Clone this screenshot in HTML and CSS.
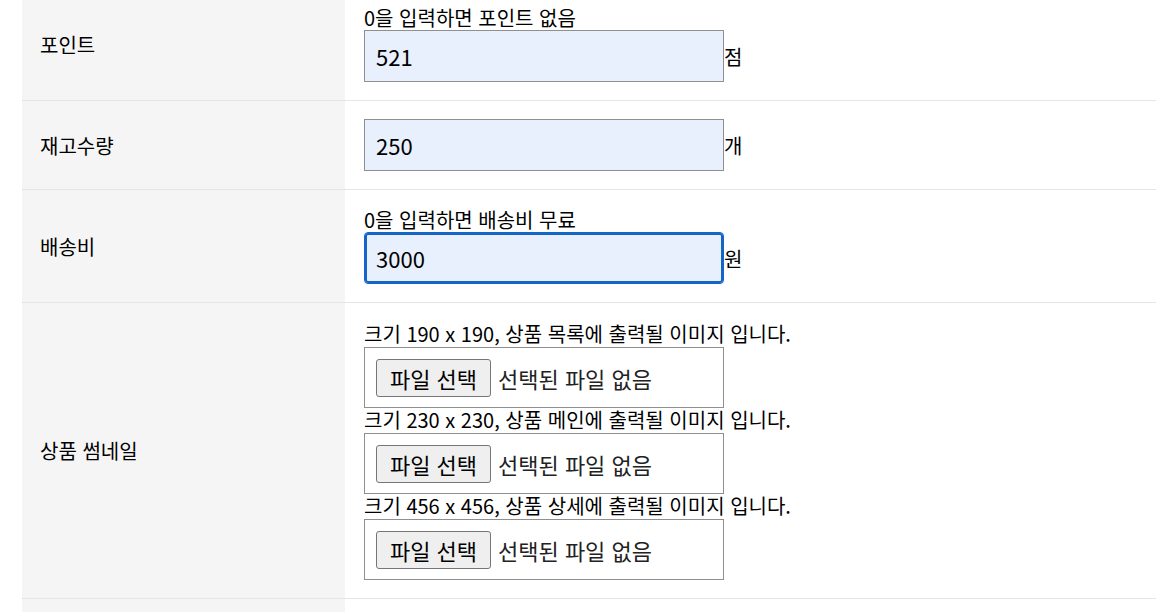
FILE: index.html
```html
<!DOCTYPE html>
<html lang="ko">
<head>
<meta charset="utf-8">
<title>상품 등록</title>
<link rel="stylesheet" href="styles.css">
</head>
<body>
<div class="page">
<table class="form-table">
  <tr>
    <th>포인트</th>
    <td>
      <div class="hint">0을 입력하면 포인트 없음</div>
      <div class="field"><span class="text-input">521</span><span class="unit">점</span></div>
    </td>
  </tr>
  <tr>
    <th>재고수량</th>
    <td>
      <div class="field"><span class="text-input">250</span><span class="unit">개</span></div>
    </td>
  </tr>
  <tr>
    <th>배송비</th>
    <td>
      <div class="hint">0을 입력하면 배송비 무료</div>
      <div class="field"><span class="text-input focused">3000</span><span class="unit">원</span></div>
    </td>
  </tr>
  <tr class="thumbs">
    <th>상품 썸네일</th>
    <td>
      <div class="hint">크기 190 x 190, 상품 목록에 출력될 이미지 입니다.</div>
      <div class="file-input"><span class="file-btn">파일 선택</span><span class="file-name">선택된 파일 없음</span></div>
      <div class="hint">크기 230 x 230, 상품 메인에 출력될 이미지 입니다.</div>
      <div class="file-input"><span class="file-btn">파일 선택</span><span class="file-name">선택된 파일 없음</span></div>
      <div class="hint">크기 456 x 456, 상품 상세에 출력될 이미지 입니다.</div>
      <div class="file-input"><span class="file-btn">파일 선택</span><span class="file-name">선택된 파일 없음</span></div>
    </td>
  </tr>
  <tr class="last">
    <th></th>
    <td></td>
  </tr>
</table>
</div>
</body>
</html>
```

FILE: styles.css
```css
html, body {
  margin: 0;
  padding: 0;
  background: #ffffff;
}
body {
  font-family: "Noto Sans CJK KR", "Noto Sans", sans-serif;
  color: #000000;
  overflow: hidden;
}
.page {
  padding-left: 22px;
  margin-top: -13px;
}
.form-table {
  width: 100%;
  border-collapse: collapse;
}
.form-table th,
.form-table td {
  border-top: 1px solid #e5e5e5;
  padding: 18px 0;
  vertical-align: middle;
}
.form-table th {
  width: 323px;
  background: #f5f5f5;
  text-align: left;
  font-weight: 400;
  font-size: 20px;
  padding-left: 18px;
  box-sizing: border-box;
}
.form-table td {
  padding-left: 19px;
}
.form-table tr.thumbs td {
  padding-top: 19px;
  padding-bottom: 18px;
}
.form-table tr.last th,
.form-table tr.last td {
  height: 60px;
}
.hint {
  font-size: 20px;
  line-height: 24px;
  height: 24px;
  white-space: nowrap;
}
.thumbs .file-input {
  margin-top: 1px;
}
.field {
  display: flex;
  align-items: center;
}
.text-input {
  box-sizing: border-box;
  width: 360px;
  height: 52px;
  padding: 0 11px;
  display: flex;
  align-items: center;
  font-size: 22px;
  background: #e8f0fe;
  border: 1px solid #8f8f8f;
}
.text-input.focused {
  border: 1px solid #1565c8;
  outline: 2px solid #1565c8;
  outline-offset: -3px;
  border-radius: 4px;
}
.unit {
  font-size: 20px;
}
.file-input {
  box-sizing: border-box;
  width: 360px;
  height: 61px;
  border: 1px solid #8f8f8f;
  padding: 0 11px;
  display: flex;
  align-items: center;
}
.file-btn {
  box-sizing: border-box;
  width: 115px;
  height: 38px;
  display: flex;
  align-items: center;
  justify-content: center;
  font-size: 22px;
  background: #efefef;
  border: 1px solid #767676;
  border-radius: 3px;
}
.file-name {
  margin-left: 7px;
  font-size: 22px;
  color: #222222;
}
```
